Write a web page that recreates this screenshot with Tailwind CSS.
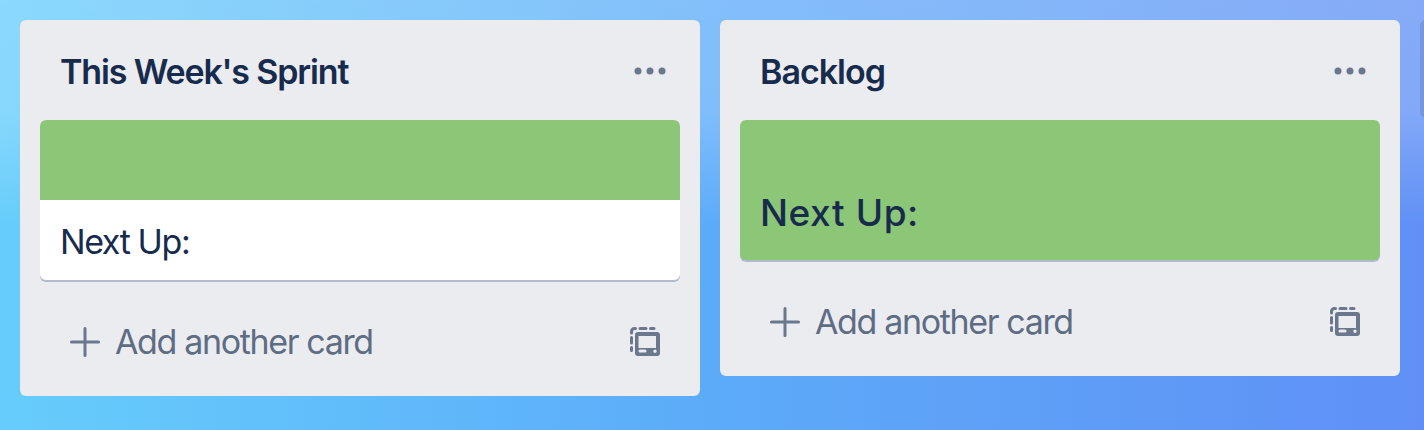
<!DOCTYPE html>
<html><head><meta charset="utf-8"><script src="https://cdn.jsdelivr.net/npm/@tailwindcss/browser@4"></script></head>
<body class="m-0">
<div class="w-[1424px] h-[430px] overflow-hidden flex items-start gap-5 p-5 font-['Inter',sans-serif] bg-[linear-gradient(180deg,rgba(255,255,255,0.24)_0%,rgba(255,255,255,0.22)_110px,rgba(255,255,255,0)_225px),linear-gradient(90deg,#66cdfb_0%,#5cabf9_50%,#6090f5_100%)]">
  <section class="w-[680px] shrink-0 rounded-md bg-[#ebecf0] px-5 pb-[18px]">
    <header class="h-[100px] pl-5 pr-[14px] flex items-center justify-between">
      <h2 class="text-[34px] leading-none mt-[4px] font-semibold tracking-[-1.15px] text-[#172b4d]">This Week's Sprint</h2>
      <svg width="32" height="8" viewBox="0 0 32 8" class="fill-[#6b778c] mt-[1px]"><circle cx="4" cy="4" r="3.500"/><circle cx="16" cy="4" r="3.500"/><circle cx="28" cy="4" r="3.500"/></svg>
    </header>
    <article class="rounded-md bg-white shadow-[0_2px_0_#b3bac9] overflow-hidden">
      <div class="h-20 bg-[#8cc677]"></div>
      <p class="h-20 pl-5 pt-[3px] flex items-center text-[34px] leading-none tracking-[-1.4px] text-[#172b4d]">Next Up:</p>
    </article>
    <footer class="mt-[26px] h-[72px] pl-[30px] pr-[19px] flex items-center justify-between text-[#5e6c84]">
      <span class="flex items-center gap-[15px] text-[34px] leading-none tracking-[-1.36px]">
        <svg width="30" height="30" viewBox="0 0 30 30" class="stroke-[#6b778c]" stroke-width="3" stroke-linecap="round"><path d="M15 1.500v27M1.500 15h27"/></svg>
        Add another card
      </span>
      <svg width="32" height="32" viewBox="0 0 32 32"><path d="M2.500 7V5.500a3 3 0 0 1 3-3h1M11 2.500h6M21.500 2.500h3.500M2.500 11.500V17M2.500 21.500v3" fill="none" stroke="#6b778c" stroke-width="3" stroke-linecap="round"/><path fill="#6b778c" fill-rule="evenodd" d="M9 6h19a3 3 0 0 1 3 3v18a3 3 0 0 1-3 3H9a3 3 0 0 1-3-3V9a3 3 0 0 1 3-3Zm.500 4v12H27V10H9.500Zm1.500 13.500a1.500 1.500 0 0 0 0 3h5a1.500 1.500 0 0 0 0-3h-5Zm15 0a1.750 1.750 0 1 0 0 3.500 1.750 1.750 0 0 0 0-3.500Z"/></svg>
    </footer>
  </section>
  <section class="w-[680px] shrink-0 rounded-md bg-[#ebecf0] px-5 pb-[18px]">
    <header class="h-[100px] pl-5 pr-[14px] flex items-center justify-between">
      <h2 class="text-[34px] leading-none mt-[4px] font-semibold tracking-[-1px] text-[#172b4d]">Backlog</h2>
      <svg width="32" height="8" viewBox="0 0 32 8" class="fill-[#6b778c] mt-[1px]"><circle cx="4" cy="4" r="3.500"/><circle cx="16" cy="4" r="3.500"/><circle cx="28" cy="4" r="3.500"/></svg>
    </header>
    <article class="h-[140px] rounded-md bg-[#8cc677] shadow-[0_2px_0_#b3bac9] pl-5 pb-[27px] flex items-end">
      <p class="text-[37px] leading-[40px] font-[550] tracking-[0.6px] text-[#172b4d]">Next Up:</p>
    </article>
    <footer class="mt-[26px] h-[72px] pl-[30px] pr-[19px] flex items-center justify-between text-[#5e6c84]">
      <span class="flex items-center gap-[15px] text-[34px] leading-none tracking-[-1.36px]">
        <svg width="30" height="30" viewBox="0 0 30 30" class="stroke-[#6b778c]" stroke-width="3" stroke-linecap="round"><path d="M15 1.500v27M1.500 15h27"/></svg>
        Add another card
      </span>
      <svg width="32" height="32" viewBox="0 0 32 32"><path d="M2.500 7V5.500a3 3 0 0 1 3-3h1M11 2.500h6M21.500 2.500h3.500M2.500 11.500V17M2.500 21.500v3" fill="none" stroke="#6b778c" stroke-width="3" stroke-linecap="round"/><path fill="#6b778c" fill-rule="evenodd" d="M9 6h19a3 3 0 0 1 3 3v18a3 3 0 0 1-3 3H9a3 3 0 0 1-3-3V9a3 3 0 0 1 3-3Zm.500 4v12H27V10H9.500Zm1.500 13.500a1.500 1.500 0 0 0 0 3h5a1.500 1.500 0 0 0 0-3h-5Zm15 0a1.750 1.750 0 1 0 0 3.500 1.750 1.750 0 0 0 0-3.500Z"/></svg>
    </footer>
  </section>
  <div class="w-[100px] h-[98px] shrink-0 rounded-md bg-black/10"></div>
</div>
</body></html>
